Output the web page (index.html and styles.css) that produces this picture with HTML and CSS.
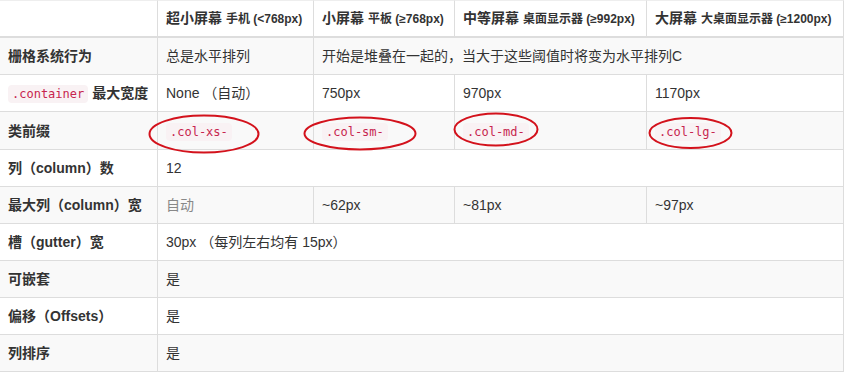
FILE: index.html
```html
<!DOCTYPE html>
<html lang="zh-CN">
<head>
<meta charset="utf-8">
<link rel="stylesheet" href="styles.css">
</head>
<body>
<div class="wrap">
<table class="grid">
  <colgroup>
    <col class="c1"><col class="c2"><col class="c3"><col class="c4"><col class="c5">
  </colgroup>
  <thead>
    <tr>
      <th></th>
      <th>超小屏幕 <small>手机 (&lt;768px)</small></th>
      <th>小屏幕 <small>平板 (≥768px)</small></th>
      <th>中等屏幕 <small>桌面显示器 (≥992px)</small></th>
      <th>大屏幕 <small>大桌面显示器 (≥1200px)</small></th>
    </tr>
  </thead>
  <tbody>
    <tr>
      <th>栅格系统行为</th>
      <td>总是水平排列</td>
      <td colspan="3">开始是堆叠在一起的，当大于这些阈值时将变为水平排列C</td>
    </tr>
    <tr>
      <th><code>.container</code> 最大宽度</th>
      <td>None （自动）</td>
      <td>750px</td>
      <td>970px</td>
      <td>1170px</td>
    </tr>
    <tr class="tall">
      <th>类前缀</th>
      <td><code>.col-xs-</code></td>
      <td><code>.col-sm-</code></td>
      <td><code>.col-md-</code></td>
      <td><code>.col-lg-</code></td>
    </tr>
    <tr>
      <th>列（column）数</th>
      <td colspan="4">12</td>
    </tr>
    <tr>
      <th>最大列（column）宽</th>
      <td class="muted">自动</td>
      <td>~62px</td>
      <td>~81px</td>
      <td>~97px</td>
    </tr>
    <tr>
      <th>槽（gutter）宽</th>
      <td colspan="4">30px （每列左右均有 15px）</td>
    </tr>
    <tr>
      <th>可嵌套</th>
      <td colspan="4">是</td>
    </tr>
    <tr>
      <th>偏移（Offsets）</th>
      <td colspan="4">是</td>
    </tr>
    <tr>
      <th>列排序</th>
      <td colspan="4">是</td>
    </tr>
  </tbody>
</table>
<svg class="marks" width="850" height="382" viewBox="0 0 850 382" aria-hidden="true">
  <ellipse cx="204" cy="134" rx="54.5" ry="18.5" />
  <ellipse cx="360" cy="133.5" rx="55.5" ry="16" />
  <ellipse cx="496" cy="129.5" rx="41.5" ry="16" />
  <ellipse cx="690.5" cy="133" rx="41" ry="15" />
</svg>
</div>
</body>
</html>
```

FILE: styles.css
```css
html, body {
  margin: 0;
  padding: 0;
  background: #fff;
}

body {
  font-family: "Liberation Sans", "Noto Sans CJK SC", sans-serif;
  font-size: 14px;
  line-height: 18px;
  color: #333;
}

.wrap {
  position: relative;
  width: 850px;
  height: 382px;
}

.grid {
  table-layout: fixed;
  width: 844px;
  border-collapse: separate;
  border-spacing: 0;
}

.c1 { width: 157px; }
.c2 { width: 156px; }
.c3 { width: 141px; }
.c4 { width: 192px; }
.c5 { width: 198px; }

.grid th,
.grid td {
  box-sizing: content-box;
  height: 20px;
  padding: 8px;
  text-align: left;
  vertical-align: middle;
  border-top: 1px solid #ddd;
  border-left: 1px solid #ddd;
  white-space: nowrap;
  overflow: hidden;
}

.grid tr.tall > * {
  height: 21px;
}

.grid tr > :first-child {
  border-left: none;
}

.grid tr > :last-child {
  border-right: 1px solid #ddd;
}

.grid thead th {
  font-weight: bold;
  border-top: 1px solid #eee;
  border-bottom: 2px solid #ddd;
  padding: 7px 8px 8px;
}

.grid thead small {
  font-size: 12px;
  font-weight: bold;
}

.grid tbody tr:first-child > * {
  border-top: none;
}

.grid tbody tr:last-child > * {
  border-bottom: 1px solid #ddd;
}

.grid tbody th {
  font-weight: bold;
}

.grid tbody tr:nth-child(odd) > * {
  background: #f9f9f9;
}

.grid .muted {
  color: #888;
}

code {
  font-family: "DejaVu Sans Mono", "Liberation Mono", monospace;
  font-size: 12px;
  line-height: 14px;
  padding: 2px 4px;
  color: #c7254e;
  background: #f9f2f4;
  border-radius: 4px;
  font-weight: normal;
}

.marks {
  position: absolute;
  left: 0;
  top: 0;
  pointer-events: none;
}

.marks ellipse {
  fill: none;
  stroke: #d3121c;
  stroke-width: 2;
}
```
